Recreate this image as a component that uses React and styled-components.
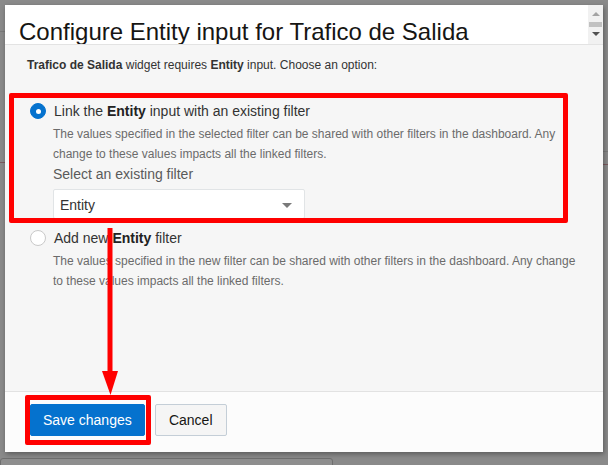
import React from "react";
import styled, { createGlobalStyle } from "styled-components";

const GlobalStyle = createGlobalStyle`
  html, body { margin: 0; padding: 0; }
  body { font-family: "Liberation Sans", Arial, sans-serif; }
  * { box-sizing: border-box; }
`;

const Backdrop = styled.div`
  position: relative;
  width: 608px;
  height: 465px;
  overflow: hidden;
  background: #8a8a8a;
  padding: 5px 0 0 5px;
`;

const PageLine = styled.div`
  position: absolute;
  left: ${(p) => p.$left}px;
  top: ${(p) => p.$top}px;
  width: ${(p) => p.$w}px;
  height: 1px;
  background: ${(p) => p.$color};
`;

const PageBox = styled.div`
  position: absolute;
  left: 0;
  top: 458px;
  width: 333px;
  height: 20px;
  border: 1px solid #6f6f6f;
  border-radius: 3px;
  background: #8e8e8e;
`;

const Dialog = styled.div`
  position: relative;
  z-index: 1;
  width: 598px;
  height: 447px;
  display: flex;
  flex-direction: column;
  background: #fcfcfc;
  box-shadow: 1px 2px 5px rgba(0, 0, 0, 0.35);
`;

const Header = styled.div`
  height: 40px;
  flex: none;
  display: flex;
  background: #ffffff;
  border-bottom: 1px solid #e3e3e3;
  overflow: hidden;
`;

const Title = styled.h1`
  flex: 1;
  margin: 0;
  padding: 15px 0 0 14px;
  font-size: 24px;
  line-height: 24px;
  font-weight: normal;
  color: #161513;
  white-space: nowrap;
`;

const ScrollBar = styled.div`
  width: 15px;
  flex: none;
  background: #f1f1f1;
  display: flex;
  flex-direction: column;
  align-items: center;
  padding-top: 7px;
`;

const ScrollArrow = styled.div`
  width: 0;
  height: 0;
  border-left: 4px solid transparent;
  border-right: 4px solid transparent;
  ${(p) =>
    p.$down
      ? `border-top: 4px solid ${p.$color}; margin-top: 5px;`
      : `border-bottom: 4px solid ${p.$color};`}
`;

const ScrollThumb = styled.div`
  width: 13px;
  height: 5px;
  margin-top: 6px;
  background: #c1c1c1;
`;

const Body = styled.div`
  flex: 1;
  background: #f6f6f6;
  padding: 10px 0 0 22px;
  border-bottom: 1px solid #e2e2e2;
`;

const Intro = styled.p`
  margin: 0 0 26px;
  font-size: 12px;
  line-height: 20px;
  color: #333333;
`;

const Option = styled.div`
  display: grid;
  grid-template-columns: 16px 1fr;
  column-gap: 8px;
  margin-left: 3px;
  margin-bottom: ${(p) => p.$gap || 0}px;
`;

const Radio = styled.span`
  width: 16px;
  height: 16px;
  margin-top: 2px;
  border-radius: 50%;
  display: flex;
  align-items: center;
  justify-content: center;
  background: ${(p) => (p.$checked ? "#0572ce" : "#ffffff")};
  border: 1px solid ${(p) => (p.$checked ? "#0572ce" : "#c9c9c9")};
  &::after {
    content: "";
    width: 5px;
    height: 5px;
    border-radius: 50%;
    background: ${(p) => (p.$checked ? "#ffffff" : "transparent")};
  }
`;

const Label = styled.div`
  font-size: 14px;
  line-height: 20px;
  color: #333333;
  b { color: #222; }
`;

const Content = styled.div`
  grid-column: 2;
  margin-left: -1px;
`;

const Desc = styled.p`
  margin: 3px 0 0;
  width: 530px;
  font-size: 12px;
  line-height: 20px;
  color: #6b6b6b;
`;

const FieldLabel = styled.div`
  font-size: 14px;
  line-height: 20px;
  color: #5a5a5a;
`;

const Select = styled.div`
  margin-top: 5px;
  width: 252px;
  height: 30px;
  background: #ffffff;
  border: 1px solid #e1e4e6;
  border-radius: 2px;
  display: flex;
  align-items: center;
  justify-content: space-between;
  padding: 2px 12px 0 6px;
  font-size: 14px;
  color: #333333;
`;

const Caret = styled.span`
  width: 0;
  height: 0;
  border-left: 5px solid transparent;
  border-right: 5px solid transparent;
  border-top: 5px solid #7a7a7a;
`;

const Footer = styled.div`
  flex: none;
  height: 60px;
  background: #fcfcfc;
  display: flex;
  align-items: flex-start;
  gap: 10px;
  padding: 12px 0 0 25px;
`;

const Button = styled.button`
  height: 32px;
  min-width: 72px;
  padding: 0 12px;
  border-radius: 2px;
  font-family: "Liberation Sans", Arial, sans-serif;
  font-size: 14px;
  cursor: pointer;
  background: ${(p) => (p.$primary ? "#0572ce" : "#f5f5f5")};
  color: ${(p) => (p.$primary ? "#ffffff" : "#161513")};
  border: 1px solid ${(p) => (p.$primary ? "#0572ce" : "#c4ced7")};
`;

const Highlight = styled.div`
  position: absolute;
  z-index: 2;
  left: ${(p) => p.$left}px;
  top: ${(p) => p.$top}px;
  width: ${(p) => p.$w}px;
  height: ${(p) => p.$h}px;
  border: 5px solid #ff0000;
  border-radius: 2px;
  pointer-events: none;
`;

const ArrowSvg = styled.svg`
  position: absolute;
  z-index: 2;
  left: 100px;
  top: 226px;
  pointer-events: none;
`;

export default function App() {
  return (
    <>
      <GlobalStyle />
      <Backdrop>
        <PageLine $left={0} $top={31} $w={5} $color="#7a7a7a" />
        <PageLine $left={0} $top={162} $w={5} $color="#7b5a5e" />
        <PageLine $left={603} $top={151} $w={5} $color="#7a7a7a" />
        <PageLine $left={603} $top={164} $w={5} $color="#7b5a5e" />
        <PageBox />
        <Dialog>
          <Header>
            <Title>Configure Entity input for Trafico de Salida</Title>
            <ScrollBar>
              <ScrollArrow $color="#a3a3a3" />
              <ScrollThumb />
              <ScrollArrow $down $color="#505050" />
            </ScrollBar>
          </Header>
          <Body>
            <Intro>
              <b>Trafico de Salida</b> widget requires <b>Entity</b> input. Choose an option:
            </Intro>
            <Option $gap={9}>
              <Radio $checked />
              <Label>
                Link the <b>Entity</b> input with an existing filter
              </Label>
              <Content>
                <Desc>
                  The values specified in the selected filter can be shared with other filters in
                  the dashboard. Any change to these values impacts all the linked filters.
                </Desc>
                <FieldLabel>Select an existing filter</FieldLabel>
                <Select>
                  <span>Entity</span>
                  <Caret />
                </Select>
              </Content>
            </Option>
            <Option>
              <Radio />
              <Label>
                Add new <b>Entity</b> filter
              </Label>
              <Content>
                <Desc>
                  The values specified in the new filter can be shared with other filters in the
                  dashboard. Any change to these values impacts all the linked filters.
                </Desc>
              </Content>
            </Option>
          </Body>
          <Footer>
            <Button $primary>Save changes</Button>
            <Button>Cancel</Button>
          </Footer>
        </Dialog>
        <Highlight $left={9} $top={93} $w={559} $h={130} />
        <Highlight $left={25} $top={395} $w={126} $h={50} />
        <ArrowSvg width="22" height="172" viewBox="0 0 22 172">
          <rect x="7.5" y="2" width="5" height="148" fill="#ff0000" />
          <polygon points="2,145 18,145 10.5,169" fill="#ff0000" />
        </ArrowSvg>
      </Backdrop>
    </>
  );
}
